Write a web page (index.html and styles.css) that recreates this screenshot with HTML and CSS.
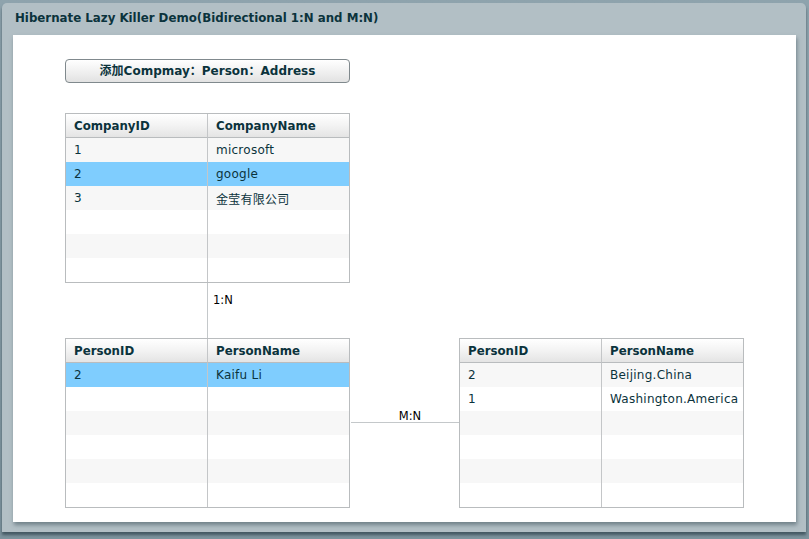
FILE: index.html
```html
<!DOCTYPE html>
<html>
<head>
<meta charset="utf-8">
<link rel="stylesheet" href="styles.css">
</head>
<body>
<div class="panel">
  <div class="panel-title">Hibernate Lazy Killer Demo(Bidirectional 1:N and M:N)</div>
  <div class="panel-body">
    <button class="add-btn">添加Compmay：Person：Address</button>
    <table class="grid company">
      <thead><tr><th>CompanyID</th><th>CompanyName</th></tr></thead>
      <tbody>
        <tr><td>1</td><td>microsoft</td></tr>
        <tr class="sel"><td>2</td><td>google</td></tr>
        <tr><td>3</td><td>金莹有限公司</td></tr>
        <tr><td></td><td></td></tr>
        <tr><td></td><td></td></tr>
        <tr><td></td><td></td></tr>
      </tbody>
    </table>
    <div class="v-link"><span class="v-label">1:N</span></div>
    <div class="bottom-row">
      <table class="grid">
        <thead><tr><th>PersonID</th><th>PersonName</th></tr></thead>
        <tbody>
          <tr class="sel"><td>2</td><td>Kaifu Li</td></tr>
          <tr><td></td><td></td></tr>
          <tr><td></td><td></td></tr>
          <tr><td></td><td></td></tr>
          <tr><td></td><td></td></tr>
          <tr><td></td><td></td></tr>
        </tbody>
      </table>
      <div class="h-link"><span class="h-label">M:N</span></div>
      <table class="grid">
        <thead><tr><th>PersonID</th><th>PersonName</th></tr></thead>
        <tbody>
          <tr><td>2</td><td>Beijing.China</td></tr>
          <tr><td>1</td><td>Washington.America</td></tr>
          <tr><td></td><td></td></tr>
          <tr><td></td><td></td></tr>
          <tr><td></td><td></td></tr>
          <tr><td></td><td></td></tr>
        </tbody>
      </table>
    </div>
  </div>
</div>
</body>
</html>
```
FILE: styles.css
```css
html, body {
  margin: 0;
  padding: 0;
}
body {
  width: 809px;
  height: 539px;
  overflow: hidden;
  background: linear-gradient(#8ea3ad, #7d939d);
  font-family: "DejaVu Sans", Verdana, "Noto Sans CJK SC", sans-serif;
  font-size: 11px;
  color: #0b333c;
}
.panel {
  margin: 3px 3px 0 2px;
  height: 529px;
  background: #b2bfc5;
  border-radius: 5px 5px 0 0;
  box-shadow: 0 3px 3px rgba(30, 50, 60, 0.6);
  display: flex;
  flex-direction: column;
}
.panel-title {
  height: 32px;
  line-height: 31px;
  padding-left: 13px;
  font-weight: bold;
  font-size: 11.8px;
  color: #0b333c;
}
.panel-body {
  margin: 0 10px 10px 11px;
  flex: 1;
  background: #fff;
  box-shadow: 1px 3px 4px rgba(60, 80, 90, 0.55);
  padding: 24px 0 0 52px;
  display: flex;
  flex-direction: column;
  align-items: flex-start;
}
.add-btn {
  width: 285px;
  height: 24px;
  margin: 0;
  padding: 0 0 3px 0;
  border: 1px solid #80898d;
  border-radius: 4px;
  background: linear-gradient(#ffffff, #f1f1f1 50%, #e2e2e2);
  font-family: inherit;
  font-size: 12px;
  font-weight: bold;
  color: #0b333c;
}
.grid {
  border-collapse: separate;
  border-spacing: 0;
  width: 285px;
  table-layout: fixed;
  border: 1px solid #b9bcbe;
}
.company {
  margin-top: 30px;
}
.grid th, .grid td {
  padding: 0 0 0 8px;
  text-align: left;
  white-space: nowrap;
  overflow: hidden;
  border-left: 1px solid #c4c6c8;
}
.grid th:first-child, .grid td:first-child {
  border-left: none;
  box-sizing: border-box;
  width: 141px;
}
.grid th {
  height: 23px;
  font-weight: bold;
  font-size: 11.8px;
  background: linear-gradient(#ffffff, #f3f3f3 50%, #e4e4e4);
  border-bottom: 1px solid #b9bcbe;
}
.grid td {
  height: 24px;
  font-size: 12px;
  letter-spacing: 0.25px;
}
.grid tbody tr:nth-child(odd) {
  background: #f7f7f7;
}
.grid tbody tr.sel {
  background: #7fcdfe;
}
.v-link {
  width: 1px;
  height: 55px;
  margin-left: 142px;
  background: #c4c8ca;
  position: relative;
}
.v-label {
  position: absolute;
  left: 6px;
  top: 10px;
  color: #000;
  font-size: 11.5px;
}
.bottom-row {
  display: flex;
  align-items: flex-start;
}
.h-link {
  width: 108px;
  height: 84px;
  margin-left: 1px;
  border-bottom: 1px solid #c4c8ca;
  display: flex;
  align-items: flex-end;
  justify-content: center;
}
.h-label {
  color: #000;
  font-size: 11.5px;
  line-height: 13px;
  padding-left: 10px;
  margin-bottom: -1px;
}
```
